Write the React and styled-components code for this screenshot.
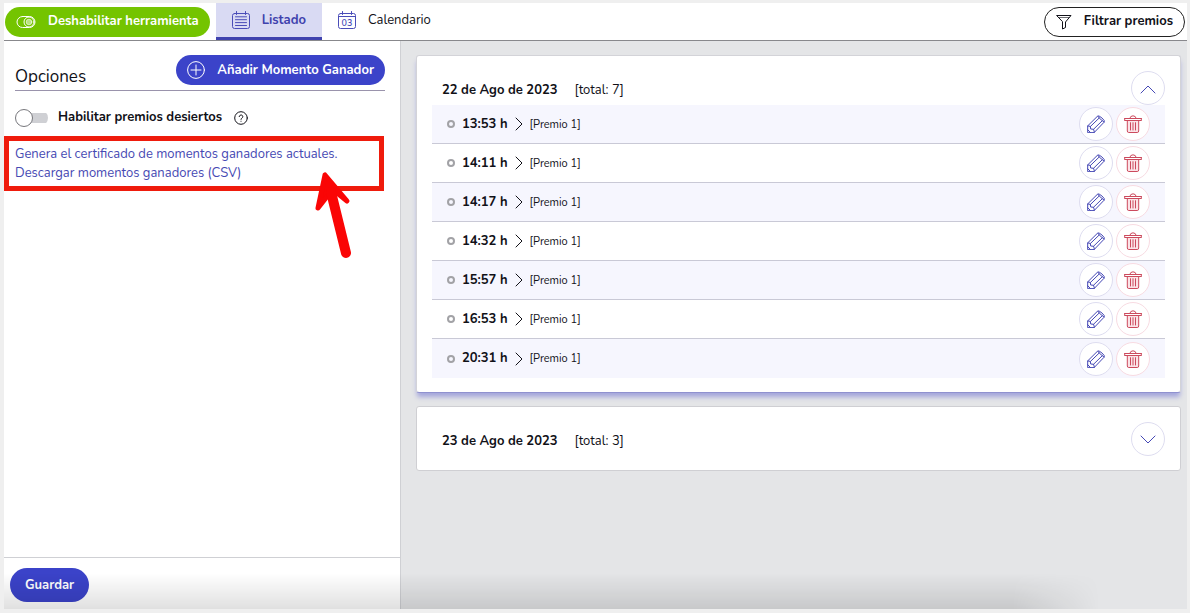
import React, { useState } from "react"
import styled, { createGlobalStyle, css } from "styled-components"

const GlobalStyle = createGlobalStyle`
  * {
    box-sizing: border-box;
  }
  body {
    margin: 0;
    background: #efefef;
    color: #111118;
    font-family: Nunito, "Open Sans", "Noto Sans", sans-serif;
    font-size: 13px;
    line-height: 19px;
  }
  button {
    font: inherit;
    color: inherit;
    cursor: pointer;
  }
  svg {
    display: block;
    flex: none;
  }
`

// ------------------------------------------------
// ICONS
// ------------------------------------------------

const Svg = styled.svg`
  fill: none;
  stroke: currentColor;
  stroke-linecap: round;
  stroke-linejoin: round;
`

const ToggleIcon = () => (
  <Svg width="20" height="14" viewBox="0 0 20 14">
    <rect x="1" y="1.500" width="18" height="11" rx="5.500" />
    <circle cx="13" cy="7" r="5" />
    <circle cx="13" cy="7" r="2.800" fill="currentColor" fillOpacity="0.5" strokeOpacity="0.6" />
  </Svg>
)

const ListIcon = () => (
  <Svg width="18" height="18" viewBox="0 0 18 18">
    <rect x="0.5" y="2.500" width="17" height="15" rx="2" />
    <path d="M4.500.5v3M13.500.5v3M3.500 5.800h11M3.500 8.700h11M3.500 11.600h11M3.500 14.500h11" />
  </Svg>
)

const CalendarIcon = () => (
  <Svg width="18" height="18" viewBox="0 0 18 18">
    <rect x="0.5" y="2.500" width="17" height="15" rx="2" />
    <path d="M4.500.5v3M13.500.5v3M.5 5.500h17" />
    <text
      x="9"
      y="15"
      textAnchor="middle"
      fontSize="9"
      fontWeight="600"
      fill="currentColor"
      stroke="none"
    >
      03
    </text>
  </Svg>
)

const FilterIcon = () => (
  <Svg width="16" height="16" viewBox="0 0 16 16">
    <path d="M1 1.500h14L9.500 8v5.500L6.500 15V8z" />
    <path d="M3 3.500h10" strokeWidth="0.6" />
  </Svg>
)

const PlusIcon = () => (
  <Svg width="18" height="18" viewBox="0 0 18 18">
    <circle cx="9" cy="9" r="8.400" />
    <path d="M9 4v10M4 9h10" />
  </Svg>
)

const HelpIcon = () => (
  <Svg width="14" height="14" viewBox="0 0 14 14">
    <circle cx="7" cy="7" r="6.300" />
    <path d="M5.200 5.600a1.800 1.700 0 1 1 2.700 1.500c-.6.400-.9.700-.9 1.300M7 10.200v.1" />
  </Svg>
)

const PencilIcon = () => (
  <Svg width="18" height="18" viewBox="0 0 18 18">
    <path d="M.7 17.300V10.900L10.300 1.400q.9-.8 1.900-.3 3 1.500 5 4.400.5 1-.3 1.900L7.400 17.300z" />
    <path d="M.7 10.900l2.600.5.400 2.600 2.900.3.800 3M3.500 11.400L12.200 3M6.500 14.300L15.300 5.700M.7 14.700l2.600 2.600M11 1.300l1.200 1.700 3.100 2.700 1.700 1.300" />
  </Svg>
)

const TrashIcon = () => (
  <Svg width="18" height="18" viewBox="0 0 18 18">
    <path d="M3.300 5.500v10.500q0 1.500 1.500 1.500h8.400q1.500 0 1.500-1.500V5.500" fill="#fbe3e7" />
    <path d="M.7 3.500h16.600M1.200 5.500h15.600M.7 3.500v2M17.300 3.500v2M5.800 3.300Q6.300.8 9 .8t3.200 2.500M6.500 7.700v7.300M9 7.700v7.300M11.500 7.700v7.300" />
  </Svg>
)

const chevrons = {
  up: "M1 13l7-7 7 7",
  down: "M1 5l7 7 7-7",
  right: "M5 2l6 6-6 6",
}

const ChevronIcon = ({ to }) => (
  <Svg width="16" height="16" viewBox="0 0 16 16">
    <path d={chevrons[to]} />
  </Svg>
)

// ------------------------------------------------
// LAYOUT
// ------------------------------------------------

const Page = styled.div`
  position: relative;
  display: flex;
  flex-direction: column;
  min-height: 100vh;
  padding: 3px 3px 4px 4px;
`

const TopBar = styled.header`
  display: flex;
  align-items: center;
  background: #fff;
  border-bottom: 1px solid #88888c;
  padding: 0 2px 0 1px;
`

const Main = styled.main`
  flex: 1;
  display: flex;
`

const Sidebar = styled.aside`
  display: flex;
  flex-direction: column;
  flex: 0 0 397px;
  background: #fff;
  border-right: 1px solid #cfd0d4;
`

const Content = styled.section`
  flex: 1;
  display: flex;
  flex-direction: column;
  gap: 13px;
  padding: 14px 6px 14px 15px;
  background: #e4e5e7;
`

const BottomShade = styled.div`
  position: absolute;
  left: 4px;
  right: 90px;
  bottom: 4px;
  height: 36px;
  pointer-events: none;
  background: linear-gradient(to bottom, transparent, rgba(0, 0, 0, 0.12));
  mask-image: linear-gradient(to right, #000 92%, transparent);
`

// ------------------------------------------------
// CONTROLS
// ------------------------------------------------

const variants = {
  green: css`
    background: #74c400;
    color: #fff;
  `,
  blue: css`
    background: #3b43c9;
    color: #fff;
  `,
  outline: css`
    background: #fff;
    border: 1px solid #222;
  `,
}

const PillButton = styled.button`
  display: flex;
  align-items: center;
  gap: 12px;
  height: ${p => (p.$tall ? 34 : 30)}px;
  padding: 0 ${p => (p.$tall ? 15 : 11)}px;
  border: 0;
  border-radius: 17px;
  font-weight: 700;
  white-space: nowrap;
  ${p => variants[p.$variant]}
`

const Tabs = styled.nav`
  display: flex;
  flex: 1;
  margin-left: 6px;
`

const Tab = styled.button`
  display: flex;
  align-items: center;
  gap: 12px;
  height: 37px;
  padding: 0 16px;
  border: 0;
  border-bottom: 3px solid transparent;
  background: none;

  svg {
    color: #4a4db8;
  }

  ${p =>
    p.$active &&
    css`
      background: #d9daf3;
      border-color: #3f42ae;
      color: #3f42ae;
      font-weight: 700;
    `}
`

const RoundButton = styled.button`
  display: grid;
  place-items: center;
  width: 34px;
  height: 34px;
  padding: 0;
  border: 1px solid ${p => (p.$danger ? "#f8dbe2" : "#deddf0")};
  border-radius: 50%;
  background: #fff;
  color: ${p => (p.$danger ? "#cc4a5d" : "#4548b5")};
`

// ------------------------------------------------
// SIDEBAR
// ------------------------------------------------

const OptionsHead = styled.div`
  display: flex;
  justify-content: space-between;
  align-items: flex-start;
  margin: 14px 15px 0 11px;
  padding-bottom: 3px;
  border-bottom: 1px solid #9a93ac;
`

const Title = styled.h1`
  margin: 11px 0 0;
  font-size: 17px;
  line-height: 21px;
  font-weight: 400;
`

const SwitchRow = styled.div`
  display: flex;
  align-items: center;
  gap: 12px;
  margin: 17px 11px 9px;
`

const SwitchLabel = styled.label`
  display: flex;
  align-items: center;
  gap: 10px;
  font-weight: 700;
`

const Switch = styled.input`
  appearance: none;
  display: flex;
  align-items: center;
  width: 33px;
  height: 18px;
  margin: 0;
  background: linear-gradient(#cfd0d4, #cfd0d4) right center / 24px 10px
    no-repeat;
  border-radius: 9px;

  &::before {
    content: "";
    width: 18px;
    height: 18px;
    box-sizing: border-box;
    border: 1px solid #77777c;
    border-radius: 50%;
    background: #fff;
  }
  &:checked::before {
    margin-left: auto;
  }
`

const HelpButton = styled.button`
  padding: 0;
  border: 0;
  background: none;
`

const LinkBox = styled.div`
  position: relative;
  display: flex;
  flex-direction: column;
  align-items: flex-start;
  margin-right: 16px;
  padding: 4px 6px 3px;
  border: 5px solid #ef1b0c;
`

const TextLink = styled.a`
  color: #4649b3;
  text-decoration: none;
`

const Arrow = styled.svg`
  position: absolute;
  right: 27px;
  top: 27px;
  fill: none;
  stroke: #fa0505;
  stroke-linecap: round;
  stroke-linejoin: round;
`

const SidebarFoot = styled.footer`
  margin-top: auto;
  padding: 10px 6px 7px;
  border-top: 1px solid #cfd0d4;
`

// ------------------------------------------------
// DAY CARDS
// ------------------------------------------------

const Card = styled.article`
  padding: 15px 15px 14px;
  border: 1px solid ${p => (p.$open ? "#d3d3d8" : "#cfcfd3")};
  border-radius: 3px;
  background: #fff;
  ${p =>
    p.$open &&
    css`
      border-bottom-color: #8f91cf;
      box-shadow: 0 5px 5px -1px #a3a5dc;
    `}
`

const CardHead = styled.header`
  display: flex;
  align-items: center;
  padding-left: 10px;
`

const Day = styled.h2`
  margin: 0 17px 0 0;
  padding-top: 4px;
  font-size: 13px;
  font-weight: 700;
`

const Total = styled.span`
  flex: 1;
  padding-top: 4px;
`

const Moments = styled.ul`
  margin: 0;
  padding: 0;
  list-style: none;
`

const Moment = styled.li`
  display: flex;
  align-items: center;
  height: 39px;
  padding: 0 15px;
  border-bottom: 1px solid #c9c9d6;
  gap: 3px;

  &:nth-child(odd) {
    background: #f6f6fe;
  }
  &:last-child {
    border-bottom: 0;
  }
`

const Dot = styled.span`
  width: 8px;
  height: 8px;
  margin-right: 4px;
  border: 2px solid #a2a2a6;
  border-radius: 50%;
`

const Prize = styled.span`
  flex: 1;
  font-size: 11px;
`

const days = [
  {
    date: "22 de Ago de 2023",
    total: 7,
    times: ["13:53", "14:11", "14:17", "14:32", "15:57", "16:53", "20:31"],
  },
  { date: "23 de Ago de 2023", total: 3, times: ["12:04", "16:20", "19:45"] },
]

const DayCard = ({ day, open, onToggle }) => (
  <Card $open={open}>
    <CardHead>
      <Day>{day.date}</Day>
      <Total>[total: {day.total}]</Total>
      <RoundButton onClick={onToggle} aria-expanded={open}>
        <ChevronIcon to={open ? "up" : "down"} />
      </RoundButton>
    </CardHead>
    {open && (
      <Moments>
        {day.times.map(time => (
          <Moment key={time}>
            <Dot />
            <strong>{time} h</strong>
            <ChevronIcon to="right" />
            <Prize>[Premio 1]</Prize>
            <RoundButton>
              <PencilIcon />
            </RoundButton>
            <RoundButton $danger>
              <TrashIcon />
            </RoundButton>
          </Moment>
        ))}
      </Moments>
    )}
  </Card>
)

const App = () => {
  const [tab, setTab] = useState("list")
  const [openDay, setOpenDay] = useState(0)

  return (
    <>
      <GlobalStyle />
      <Page>
        <TopBar>
          <PillButton $variant="green">
            <ToggleIcon />
            Deshabilitar herramienta
          </PillButton>
          <Tabs>
            <Tab $active={tab === "list"} onClick={() => setTab("list")}>
              <ListIcon />
              Listado
            </Tab>
            <Tab $active={tab === "cal"} onClick={() => setTab("cal")}>
              <CalendarIcon />
              Calendario
            </Tab>
          </Tabs>
          <PillButton $variant="outline">
            <FilterIcon />
            Filtrar premios
          </PillButton>
        </TopBar>
        <Main>
          <Sidebar>
            <OptionsHead>
              <Title>Opciones</Title>
              <PillButton $variant="blue">
                <PlusIcon />
                Añadir Momento Ganador
              </PillButton>
            </OptionsHead>
            <SwitchRow>
              <SwitchLabel>
                <Switch type="checkbox" />
                Habilitar premios desiertos
              </SwitchLabel>
              <HelpButton>
                <HelpIcon />
              </HelpButton>
            </SwitchRow>
            <LinkBox>
              <TextLink href="#certificado">
                Genera el certificado de momentos ganadores actuales.
              </TextLink>
              <TextLink href="#csv">Descargar momentos ganadores (CSV)</TextLink>
              <Arrow width="40" height="92" viewBox="0 0 40 92">
                <path
                  d="M13 7L6 40L17 26L24 24L35 33Z"
                  fill="#fa0505"
                  strokeWidth="5"
                />
                <path d="M19 24L34 85" strokeWidth="10" />
              </Arrow>
            </LinkBox>
            <SidebarFoot>
              <PillButton $variant="blue" $tall>
                Guardar
              </PillButton>
            </SidebarFoot>
          </Sidebar>
          <Content>
            {days.map((day, i) => (
              <DayCard
                key={day.date}
                day={day}
                open={openDay === i}
                onToggle={() => setOpenDay(openDay === i ? -1 : i)}
              />
            ))}
          </Content>
        </Main>
        <BottomShade />
      </Page>
    </>
  )
}

export default App
